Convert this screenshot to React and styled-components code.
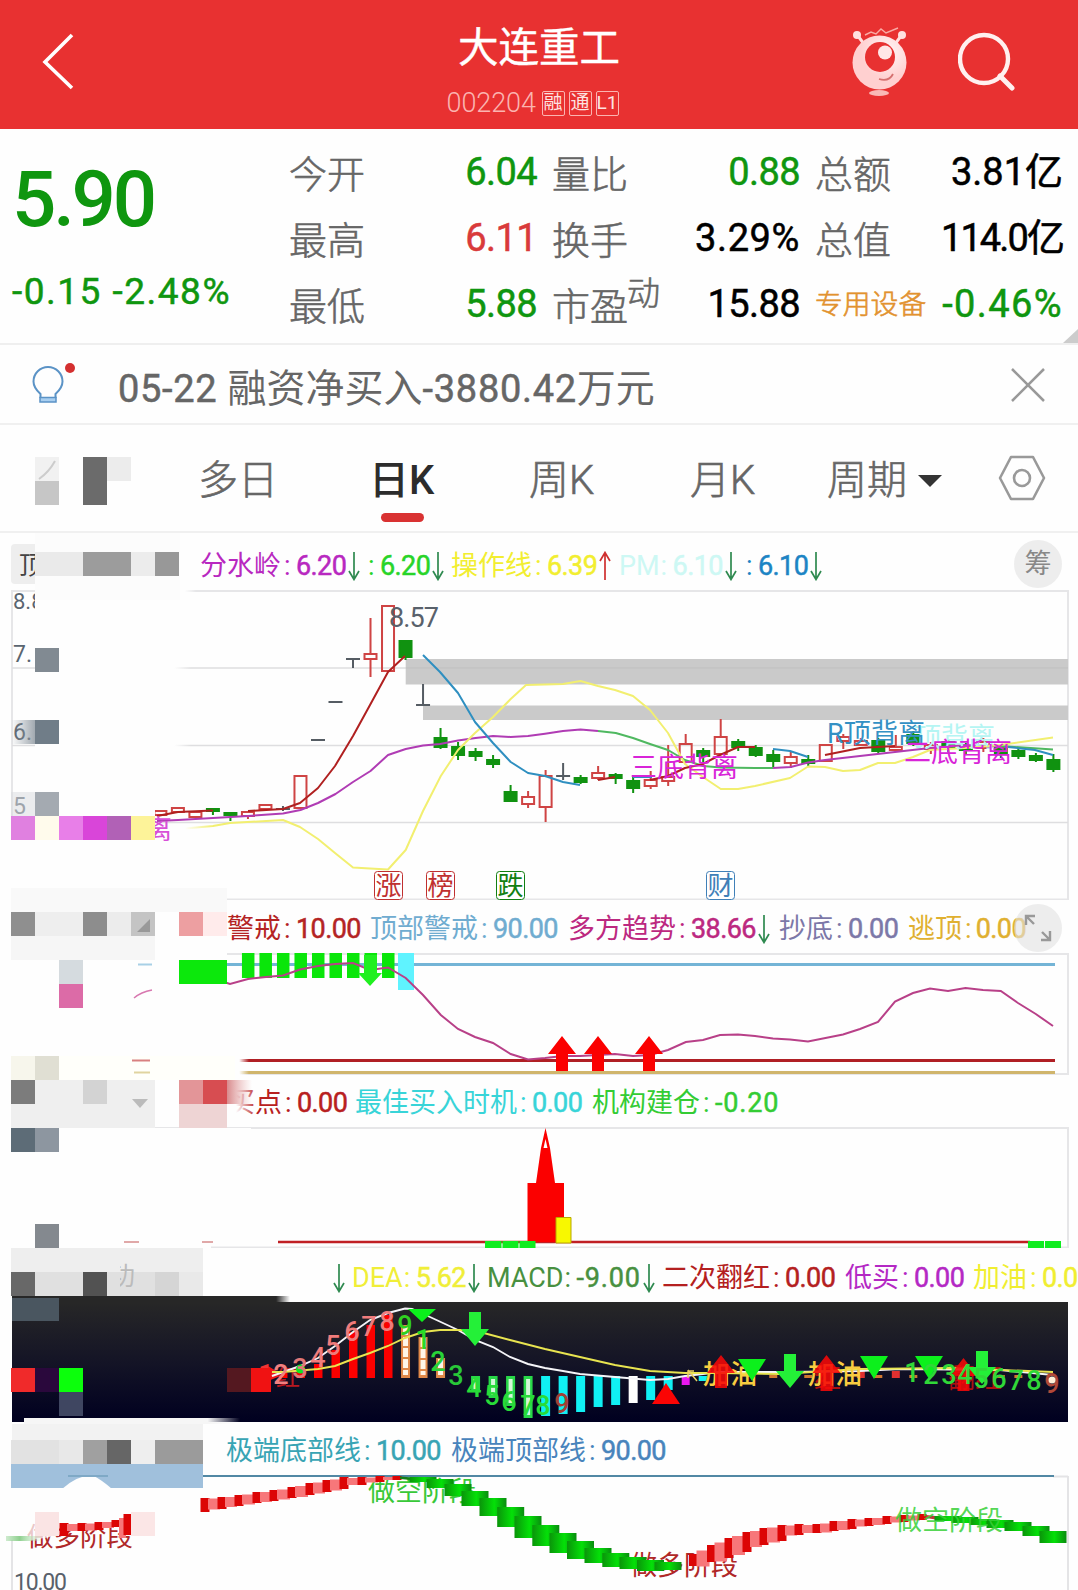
import React from "react";
import styled, { createGlobalStyle, css } from "styled-components";

const RED = "#e83131";
const UP = "#d93a3a";
const DOWN = "#0f960f";

const GlobalStyle = createGlobalStyle`
  * {
    box-sizing: border-box;
  }

  body {
    margin: 0;
    background-color: #fefefe;
    font-family: Roboto, "Noto Sans CJK SC", sans-serif;
  }
`;

const Page = styled.div`
  width: 1078px;
  height: 1590px;
  overflow: hidden;
  background-color: #fefefe;
`;

/* header */

const Header = styled.header`
  display: grid;
  grid-template-columns: 360px 1fr 360px;
  height: 129px;
  background-color: ${RED};
  color: #fff;
`;

const BackButton = styled.div`
  padding: 31px 0 0 40px;
`;

const TitleBlock = styled.div`
  display: flex;
  flex-direction: column;
  align-items: center;
  padding-top: 23px;
`;

const Title = styled.h1`
  margin: 0;
  font-size: 40.5px;
  font-weight: 400;
  line-height: 50px;
  -webkit-text-stroke: 0.4px #fff;
`;

const CodeRow = styled.div`
  display: flex;
  align-items: center;
  height: 26px;
  margin: 17px 0 0 -9px;
`;

const Code = styled.span`
  width: 95px;
  font-size: 27px;
  font-weight: 300;
  letter-spacing: -0.1px;
  color: #fbb4b0;
`;

const Tag = styled.span`
  width: 23px;
  height: 25px;
  margin-right: 4px;
  border: 1px solid #fbb4b0;
  border-radius: 2px;
  font-size: 19px;
  line-height: 22px;
  text-align: center;
  color: #fde3e1;
`;

const HeaderActions = styled.div`
  display: flex;
  justify-content: flex-end;
  gap: 51px;
  padding: 25px 62px 0 0;
`;

/* quote */

const Quote = styled.section`
  position: relative;
  display: grid;
  grid-template-columns: 289px 1fr;
  height: 216px;
  border-bottom: 2px solid #efefef;
`;

const PriceBlock = styled.div`
  padding: 18px 0 0 12px;
  color: ${DOWN};
`;

const Price = styled.div`
  font-size: 78px;
  font-weight: 500;
  line-height: 106px;
  letter-spacing: -3.2px;
`;

const Change = styled.div`
  margin-top: 19px;
  font-size: 37px;
  line-height: 40px;
  font-weight: 400;
  -webkit-text-stroke: 0.5px ${DOWN};
  letter-spacing: 1.5px;
  white-space: nowrap;
`;

const Metrics = styled.div`
  display: grid;
  grid-template-columns: repeat(3, 248px);
  grid-auto-rows: 66px;
  column-gap: 15px;
  padding-top: 9px;
`;

const Metric = styled.div`
  display: flex;
  justify-content: space-between;
  align-items: center;
  white-space: nowrap;
`;

const MetricLabel = styled.span`
  padding-top: ${({ $small }) => ($small ? 3 : 7)}px;
  font-size: ${({ $small }) => ($small ? 27.8 : 38)}px;
  font-weight: 300;
  line-height: 44px;
  color: ${({ $small }) => ($small ? "#e2922f" : "#666")};
  -webkit-text-stroke: 0.6px currentColor;

  sup {
    display: inline-block;
    margin-left: -1px;
    font-size: 33px;
    line-height: 20px;
    vertical-align: 15px;
  }
`;

const MetricValue = styled.span`
  padding-top: 1px;
  font-size: 38px;
  line-height: 44px;
  letter-spacing: ${({ $track = -0.6 }) => $track}px;
  color: ${({ $color }) => $color || "#000"};
  -webkit-text-stroke: 0.5px currentColor;
`;

const Corner = styled.div`
  position: absolute;
  right: 0;
  bottom: 0;
  border-style: solid;
  border-width: 0 0 14px 15px;
  border-color: transparent transparent #ccc transparent;
`;

/* notice */

const Notice = styled.section`
  display: flex;
  align-items: center;
  height: 80px;
  padding: 1px 33px 0 31px;
  border-bottom: 2px solid #f0f0f0;
`;

const NoticeText = styled.div`
  flex: 1;
  padding-left: 39px;
  font-size: 39px;
  color: #666;
  white-space: nowrap;

  span {
    font-size: 38px;
    letter-spacing: 0.7px;
    -webkit-text-stroke: 0.5px #666;
  }
`;

/* tabs */

const Tabs = styled.nav`
  display: flex;
  align-items: center;
  height: 108px;
  padding-left: 35px;
  border-bottom: 2px solid #f0f0f0;
`;

const Tab = styled.div`
  display: flex;
  flex-direction: column;
  justify-content: center;
  width: ${({ $width }) => $width}px;
  padding-top: 5px;
  font-size: 40px;
  line-height: 56px;
  font-weight: ${({ $active }) => ($active ? 500 : 300)};
  color: ${({ $active }) => ($active ? "#2c2c2c" : "#666")};
  ${({ $active }) =>
    !$active &&
    css`
      -webkit-text-stroke: 0.6px currentColor;
    `}
`;

const TabMark = styled.i`
  width: 43px;
  height: 9px;
  margin: 4px 0 -13px 12px;
  border-radius: 5px;
  background-color: #d93232;
`;

const TabLabel = styled.span`
  display: flex;
  align-items: center;
  gap: 11px;
  line-height: 56px;
`;

/* charts */

const Charts = styled.main`
  position: relative;
`;

const Legend = styled.div`
  position: relative;
  display: flex;
  align-items: center;
  height: ${({ $height }) => $height}px;
  padding: ${({ $drop }) => $drop || 0}px 0 0 ${({ $start }) => $start}px;
  overflow: hidden;
  font-size: 27px;
  line-height: 36px;
  white-space: nowrap;
`;

const LegendEntry = styled.div`
  display: flex;
  flex: none;
  align-items: center;
  width: ${({ $width }) => $width}px;
  color: ${({ $color }) => $color};
`;

const LegendColon = styled.span`
  width: ${({ $narrow }) => ($narrow ? 13 : 15)}px;
  padding-left: ${({ $narrow }) => ($narrow ? 1 : 3)}px;
`;

const LegendValue = styled.span`
  margin-right: 2px;
  letter-spacing: ${({ $signed }) => ($signed ? 0.8 : -0.6)}px;
  -webkit-text-stroke: 0.5px currentColor;
`;

const RoundButton = styled.div`
  position: absolute;
  top: ${({ $top }) => $top}px;
  right: 16px;
  display: flex;
  align-items: center;
  justify-content: center;
  width: 48px;
  height: 48px;
  border-radius: 50%;
  background-color: rgba(225, 225, 225, 0.6);
  font-size: 27px;
  color: #888;
`;

const Plot = styled.svg`
  display: block;
  width: 1078px;
  height: ${({ $height }) => $height}px;
  overflow: hidden;
`;

const PlotText = styled.text`
  font-family: Roboto, "Noto Sans CJK SC", sans-serif;
  font-size: ${({ $size }) => $size || 27}px;
  font-weight: ${({ $bold }) => ($bold ? 500 : 400)};
`;

const Mosaic = styled.svg`
  position: absolute;
  top: 0;
  left: 0;
  width: 320px;
  height: 1057px;
`;

const Arrow = ({ up }) => (
  <svg width="12" height="30" viewBox="0 0 12 30" fill="none">
    <path
      d={up ? "M6 29V2M1 10L6 1.5L11 10" : "M6 1V28M1 20L6 28.5L11 20"}
      stroke={up ? "#cf3030" : "#2f8a50"}
      strokeWidth="1.7"
    />
  </svg>
);

const LegendRow = ({ items, children, ...rest }) => (
  <Legend {...rest}>
    {items.map(([label, value, color, width, arrow], i) => (
      <LegendEntry key={i} $color={color} $width={width}>
        {label}
        {value && <LegendColon $narrow={/^[A-Z]*$/.test(label)}>:</LegendColon>}
        {value && <LegendValue $signed={value[0] === "-"}>{value}</LegendValue>}
        {arrow && <Arrow up={arrow === "up"} />}
      </LegendEntry>
    ))}
    {children}
  </Legend>
);

const X = (i) => 353 + 17.51 * i;

// [slot, color, high, low, bodyTop, bodyBottom]
const CANDLES = [
  [-11, "r", 811, 816, 811, 815],
  [-10, "r", 808, 812, 808, 812],
  [-9, "r", 812, 817, 812, 817],
  [-8, "g", 808, 815, 809, 811],
  [-7, "g", 813, 821, 813, 815],
  [-6, "r", 812, 819, 812, 816],
  [-5, "r", 805, 809, 805, 809],
  [-4, "k", 806, 811, 809, 809],
  [-3, "r", 776, 808, 776, 808],
  [-2, "k", 740, 740, 740, 740],
  [-1, "k", 702, 702, 702, 702],
  [0, "k", 659, 668, 659, 659],
  [1, "r", 618, 677, 654, 659],
  [2, "r", 606, 671, 606, 671],
  [3, "g", 640, 660, 641, 657],
  [4, "k", 684, 705, 705, 705],
  [5, "g", 728, 749, 738, 747],
  [6, "g", 742, 760, 747, 755],
  [7, "g", 748, 761, 752, 756],
  [8, "g", 755, 768, 760, 764],
  [9, "g", 785, 802, 792, 801],
  [10, "r", 791, 808, 797, 804],
  [11, "r", 770, 822, 776, 807],
  [12, "k", 763, 780, 776, 776],
  [13, "g", 775, 784, 778, 782],
  [14, "r", 766, 780, 773, 778],
  [15, "g", 773, 784, 775, 778],
  [16, "g", 775, 793, 781, 788],
  [17, "r", 771, 789, 780, 786],
  [18, "r", 745, 786, 777, 781],
  [19, "r", 734, 762, 744, 762],
  [20, "g", 748, 764, 751, 756],
  [21, "r", 719, 754, 737, 754],
  [22, "g", 739, 751, 742, 747],
  [23, "g", 745, 757, 748, 755],
  [24, "g", 750, 768, 755, 761],
  [25, "r", 752, 768, 757, 763],
  [26, "g", 755, 767, 760, 763],
  [27, "r", 745, 761, 745, 761],
  [28, "r", 734, 749, 737, 741],
  [29, "r", 738, 746, 741, 745],
  [30, "g", 738, 754, 741, 751],
  [31, "r", 735, 752, 747, 750],
  [32, "g", 731, 746, 735, 743],
  [33, "r", 742, 754, 745, 749],
  [34, "g", 739, 752, 742, 747],
  [35, "g", 743, 755, 746, 750],
  [36, "r", 738, 752, 742, 748],
  [37, "g", 745, 758, 748, 753],
  [38, "g", 748, 759, 751, 756],
  [39, "g", 753, 762, 756, 760],
  [40, "g", 754, 772, 760, 769],
];

const CANDLE_COLORS = { r: "#cf4444", g: "#109210", k: "#555c63" };

const Candle = ({ data: [slot, kind, high, low, top, bottom] }) => {
  const x = X(slot);
  const color = CANDLE_COLORS[kind];
  if (kind === "k") {
    return <path d={`M${x - 7} ${top}h14M${x} ${high}V${low}`} stroke={color} strokeWidth="2" />;
  }
  return (
    <g stroke={color} strokeWidth="2">
      <path d={`M${x} ${high}V${top}M${x} ${bottom}V${low}`} />
      <rect
        x={x - 6}
        y={top}
        width="12"
        height={bottom - top}
        fill={kind === "g" ? color : "none"}
      />
    </g>
  );
};

const MAIN_LINES = [
  ["#b03cb4", "157,821 178,820 213,818 248,816 283,813.5 300.5,810 318,803 335.5,794 353,782 370.5,771 388,755 405.7,749 423,745.5 440,744 458,740.5 475.6,738 493,736 510.7,737 528,736 545,733.7 563,731 580.5,729.5 598,731"],
  ["#4fb860", "598,731 615.8,733 633,738 650,744 668,750 685,760 703,766 720.8,767.5 755,768 773,768"],
  ["#b03cb4", "773,768 790.8,767 808,762.5 825,760 860,756 895,752 930,748 965,745 1008,747"],
  ["#4fb860", "1000,746 1053,749.5"],
  ["#f2ef70", "179,829 213,826 230,823 283,820 300,827 318,839 335,853 353,867.5 370,868.5 388,869.5 405.7,850 423,811 440.8,776 458,750 475,733 493,717 510.7,699 526,685 545,684.5 563,684 580.5,681 598,686 615,690 633,696 650,710 668,733 685,764 703,777 720.8,789 738,789 755,786 790,778 808,766.5 825,767 843,771 860,770 878,763 895,763 913,757 930,750 965,748 1000,745 1053,737.5"],
  ["#2f8fc0", "423,655 440,672 458,693 475,722 493,743 510.7,762 528,773 545,776 563,782 580,785"],
  ["#2f8fc0", "773,749 790,751 808,757"],
  ["#2f8fc0", "633,777 652,777"],
  ["#2f8fc0", "1008,747 1035,750 1053,755"],
  ["#b02020", "157,816 178,812 213,810.5"],
  ["#b02020", "248,811 283,809 300,803 318,788 335,766 353,736 370,705 388,672 405,656"],
  ["#b02020", "598,780 615,777"],
  ["#b02020", "650,780 668,776 685,768 703,764 720,755 738,747 755,747"],
  ["#b02020", "825,755 860,748 895,746"],
];

const EVENTS = [
  [374, "涨", "#c03030"],
  [426, "榜", "#c03030"],
  [496, "跌", "#128012"],
  [706, "财", "#4080b8"],
];

const MainChart = () => (
  <Plot $height={310} viewBox="0 590 1078 310" fill="none">
    <path d="M12 591H1068V899.5H12Z" stroke="#e6e6e8" strokeWidth="2" />
    <path d="M12 668H1068M12 745.5H1068M12 822.5H1068" stroke="#dedee0" strokeWidth="1.3" />
    <path d="M405.7 659H1068V684.5H405.7ZM423 705.5H1068V720H423Z" fill="#cacaca" />
    <path d="M406 668H1068" stroke="#bfbfbf" />
    {CANDLES.map((candle) => (
      <Candle key={candle[0]} data={candle} />
    ))}
    {MAIN_LINES.map(([color, points], i) => (
      <polyline key={i} points={points} stroke={color} strokeWidth="2" strokeLinejoin="round" />
    ))}
    <PlotText x="389" y="627" fill="#59616b" textLength="50">8.57</PlotText>
    <PlotText x="630" y="777" fill="#d824d8">三底背离</PlotText>
    <PlotText x="914" y="747" fill="#b5f5f3">顶背离</PlotText>
    <PlotText x="827" y="743" fill="#3390c4" textLength="98">R顶背离</PlotText>
    <PlotText x="904" y="762" fill="#d824d8">二底背离</PlotText>
    {EVENTS.map(([x, text, color]) => (
      <g key={text}>
        <rect x={x + 0.5} y="871.5" width="28" height="28" rx="3" fill="#fff" stroke={color} />
        <PlotText x={x + 1.5} y="895" fill={color} $size={26}>{text}</PlotText>
      </g>
    ))}
    <g fill="#5a6570">
      <PlotText x="13" y="609" $size={22}>8.8</PlotText>
      <PlotText x="13" y="662" $size={23}>7.</PlotText>
      <PlotText x="13" y="740" $size={23}>6.</PlotText>
      <PlotText x="13" y="814" $size={23}>5</PlotText>
    </g>
  </Plot>
);

const upArrow = (x, top, bottom) =>
  `M${x} ${top}L${x + 14} ${top + 18}H${x + 6}V${bottom}H${x - 6}V${top + 18}H${x - 14}Z`;
const downArrow = (x, top, bottom) =>
  `M${x} ${bottom}L${x + 14} ${bottom - 17}H${x + 6}V${top}H${x - 6}V${bottom - 17}H${x - 14}Z`;
const downTriangle = (x, top, bottom) => `M${x - 14} ${top}H${x + 14}L${x} ${bottom}Z`;

const TrendChart = () => (
  <Plot $height={122} viewBox="0 953 1078 122" fill="none">
    <path d="M12 954H1068V1074H12" stroke="#e6e6e8" strokeWidth="2" />
    <path d="M180 964.5H1055" stroke="#74b4d6" strokeWidth="3" />
    <path d="M150 1060.5H1055" stroke="#b01f24" strokeWidth="3" />
    <path d="M150 1072.5H1055" stroke="#d0b56c" strokeWidth="3" />
    {[-6, -5, -4, -3, -2, -1, 0, 1, 2].map((i) => (
      <rect key={i} x={X(i) - 6} y="953" width="12.5" height="25" fill="#0ae60a" />
    ))}
    <path d="M398 953H414V990H398Z" fill="#5ff3ff" />
    <polyline
      points="224,982 230,984 248,979 266,977 283,975.5 300,969.5 318,966 335,964 353,963 370,970 388,967.5 405.7,978 423,995 440.8,1015 458,1029 475,1037 493,1043 510.7,1054 528,1059.5 545,1058 563,1056 580,1056 598,1055 615,1054 633,1056 650,1055 668,1050 685.8,1042 703,1040 720,1035 738,1034.5 755,1036 773,1038.5 790,1039.5 808,1041.5 843,1034.5 860,1029 878,1022 895,1001.5 913,993 930,988.5 948,991 965.5,988 983,990 1000.8,991 1018,1003 1035.8,1014 1053,1026"
      stroke="#b84088"
      strokeWidth="2"
    />
    <path d="M364 955H377V973H382L370 986L358 973H364Z" fill="#20f020" />
    <path d={upArrow(562, 1036, 1071) + upArrow(598, 1036, 1071) + upArrow(649, 1036, 1071)} fill="#fb0000" />
  </Plot>
);

const BuyChart = () => (
  <Plot $height={121} viewBox="0 1127 1078 121" fill="none">
    <path d="M12 1128H1068V1247.5H12" stroke="#e6e6e8" strokeWidth="2" />
    <path d="M278 1242H1030" stroke="#c01f24" strokeWidth="2.6" />
    <path d="M527.5 1242V1183H536L541 1148L545.5 1128L550 1148L555 1183H564V1242Z" fill="#fb0000" />
    <path d="M543.5 1148L545.5 1139L547.5 1148Z" fill="#fff" />
    <path d="M556 1217.5H571V1243H556Z" fill="#f8f800" stroke="#b8a800" />
    <path
      d="M485 1241h16.5v7h-16.5zM502.5 1241h16v7h-16zM519.5 1241h16v7h-16zM1028 1241h16v7h-16zM1045 1241h16v7h-16z"
      fill="#10ec20"
    />
  </Plot>
);

const RED_BARS = [[-4, 1373], [-3, 1371], [-2, 1364], [-1, 1350], [0, 1332], [1, 1325], [2, 1315]];
const STRIPED_BARS = [[3, 1325], [4, 1337], [5, 1358]];
const GREEN_BARS = [[7, 1392], [8, 1398], [9, 1406], [10, 1418]];
const CYAN_BARS = [[11, 1416], [12, 1414], [13, 1412], [14, 1407], [15, 1405], [17, 1400], [18, 1390], [20, 1381]];

// [text, center, baseline, color]
const COUNTS = [
  ["1", 266, 1384, "#f03434"],
  ["2", 281, 1384, "#f08080"],
  ["3", 300, 1378, "#e07878"],
  ["4", 318, 1367, "#f07c7c"],
  ["5", 333, 1355, "#f07c7c"],
  ["6", 352, 1341, "#f07c7c"],
  ["7", 369, 1336, "#f07c7c"],
  ["8", 387, 1331, "#f07c7c"],
  ["9", 405, 1335, "#30d020"],
  ["1", 423, 1349, "#28dc28"],
  ["2", 438, 1371, "#28d438"],
  ["3", 456, 1385, "#28c838"],
  ["4", 474, 1397, "#28dc38"],
  ["5", 492, 1405, "#28dc38"],
  ["6", 509, 1411, "#28dc38"],
  ["7", 528, 1415, "#28dc38"],
  ["8", 543, 1415, "#28dc38"],
  ["9", 562, 1413, "#a04034"],
  ["1", 912, 1382, "#30d838"],
  ["2", 931, 1384, "#30d838"],
  ["3", 949, 1384, "#30d838"],
  ["4", 965, 1384, "#30d838"],
  ["5", 981, 1388, "#30d838"],
  ["6", 999, 1388, "#30d838"],
  ["7", 1016, 1390, "#30d838"],
  ["8", 1034, 1390, "#30d838"],
  ["9", 1052, 1393, "#b04838"],
];

const MacdChart = () => (
  <Plot $height={120} viewBox="0 1302 1078 120" fill="none">
    <defs>
      <linearGradient id="night" x1="0" y1="0" x2="0" y2="1">
        <stop offset="0" stopColor="#272727" />
        <stop offset="0.5" stopColor="#141426" />
        <stop offset="1" stopColor="#000020" />
      </linearGradient>
    </defs>
    <path d="M12 1302H1068V1422H12Z" fill="url(#night)" />
    {RED_BARS.map(([i, top]) => (
      <rect key={i} x={X(i) - 4} y={top} width="8.5" height={1378 - top} fill="#fb0000" />
    ))}
    {STRIPED_BARS.map(([i, top]) => (
      <g key={i}>
        <rect x={X(i) - 4.5} y={top} width="9" height={1378 - top} fill="#e08848" />
        <path d={`M${X(i)} ${top + 1}V1375`} stroke="#fff6e8" strokeWidth="5" strokeDasharray="9 2" />
      </g>
    ))}
    {GREEN_BARS.map(([i, bottom]) => (
      <g key={i}>
        <rect x={X(i) - 4.5} y="1376" width="9" height={bottom - 1376} fill="#28d848" />
        <rect x={X(i) - 2} y="1379" width="4" height={bottom - 1382} fill="#d4f8d8" />
      </g>
    ))}
    {CYAN_BARS.map(([i, bottom]) => (
      <rect key={i} x={X(i) - 4.5} y="1376" width="9" height={bottom - 1376} fill="#10f0f4" />
    ))}
    <path d={`M${X(16) - 4.5} 1376h9v27h-9z`} fill="#fff" />
    <path d={`M${X(19) - 4} 1376h8v9h-8z`} fill="#e818f0" />
    {[29, 31].map((i) => (
      <rect key={i} x={X(i) - 4} y="1371" width="8" height="7" fill="#e03030" />
    ))}
    {[24, 26, 30, 32, 37, 38].map((i) => (
      <rect key={i} x={X(i) - 4} y="1375" width="8" height="3" fill="#d07830" />
    ))}
    <path d="M268 1366L283 1375L268 1381Z" fill="#f01818" />
    <PlotText x="276" y="1386" fill="#b81820" $size={24}>红</PlotText>
    <PlotText x="814" y="1388" fill="#b01010">红</PlotText>
    <PlotText x="948" y="1388" fill="#b01010">翻红</PlotText>
    <polyline
      points="272,1376 300,1366 318,1358 335,1346 353,1332 370,1320 388,1313 405,1308.5 412,1309 430,1317 458,1330 475,1340 493,1347 510,1357 528,1364 545,1368 563,1371 580,1374 615,1377 650,1380 668,1379 685,1376 703,1374 720,1372 790,1372 860,1371 900,1369 1000,1370 1053,1375"
      stroke="#f4f4f8"
      strokeWidth="1.9"
    />
    <polyline
      points="272,1372 283,1372 318,1369 335,1366 353,1359 370,1353 388,1346 405,1338 423,1332 440,1330 460,1330 480,1332 510,1340 545,1349 580,1357 615,1365 650,1371 685,1373 720,1373 780,1374 860,1369 950,1368 1053,1372"
      stroke="#e8e450"
      strokeWidth="1.9"
    />
    <PlotText x="703" y="1384" fill="#f8cc40" $bold>加油</PlotText>
    <PlotText x="808" y="1384" fill="#f8cc40" $bold>加油</PlotText>
    <path
      d={upArrow(721, 1355, 1388) + upArrow(826.5, 1355, 1391) + upArrow(963.5, 1358, 1391)}
      fill="#f60808"
      fillOpacity="0.88"
    />
    <path d="M688 1370L697 1381M688 1378V1371H694" stroke="#e8d060" strokeWidth="1.5" />
    <path d="M666 1383L680 1404H652Z" fill="#fb0404" />
    <path
      d={
        downTriangle(422, 1309, 1322) +
        downTriangle(752, 1359, 1381) +
        downTriangle(874, 1356, 1379) +
        downTriangle(929, 1356, 1379)
      }
      fill="#0cf01c"
    />
    <path d={downArrow(475, 1312, 1346) + downArrow(790, 1354, 1388) + downArrow(982, 1351, 1384)} fill="#24f038" />
    <circle cx="300.5" cy="1369" r="4.5" fill="#10e820" />
    {COUNTS.map(([text, x, y, color], i) => (
      <PlotText key={i} x={x} y={y} fill={color} textAnchor="middle" $bold>
        {text}
      </PlotText>
    ))}
    <circle cx="1052" cy="1380" r="3.5" fill="#fff0d8" />
  </Plot>
);

// [center, top, bottom]
const RED_STEPS = [
  [[205, 1498, 1512], [222, 1497, 1509], [239, 1495, 1506], [257, 1492, 1503], [274, 1490, 1501], [292, 1487, 1498], [310, 1483, 1495], [327, 1480, 1492], [344, 1477, 1489], [362, 1477, 1485], [380, 1476, 1482], [397, 1476, 1480]],
  [[693.5, 1554, 1566], [711.5, 1545, 1562], [729, 1538, 1558], [747, 1532, 1552], [764, 1528, 1545], [782, 1525, 1541], [799, 1524, 1535], [817, 1524, 1533], [834, 1521, 1531], [852, 1519, 1529], [869, 1518, 1526], [887, 1516, 1524], [904, 1515, 1522], [922, 1514, 1520]],
  [[64, 1523, 1536], [82, 1523, 1531], [99, 1522, 1530], [116, 1520, 1527], [128, 1514, 1535]],
];
const GREEN_STEPS = [
  [423, 1477, 1482], [440, 1479, 1488], [458, 1484, 1496], [475, 1491, 1506], [493, 1498, 1516],
  [510.7, 1507, 1527], [528, 1516, 1538], [545.8, 1525, 1546], [563, 1533, 1553], [580.5, 1541, 1559],
  [598, 1548, 1563], [615.8, 1553, 1567], [633, 1557, 1569], [650.5, 1560, 1571], [668, 1562, 1570],
  [948, 1516, 1521], [965, 1517, 1523], [983, 1519, 1525], [1000, 1520, 1528], [1018, 1522, 1531],
  [1036, 1526, 1536], [1053, 1531, 1543],
];

const StageChart = () => (
  <Plot $height={115} viewBox="0 1475 1078 115" fill="none">
    <defs>
      <linearGradient id="ribbon">
        <stop offset="0" stopColor="#0a940a" />
        <stop offset="0.55" stopColor="#04e008" />
        <stop offset="1" stopColor="#0a8c10" />
      </linearGradient>
      <linearGradient id="tail">
        <stop offset="0" stopColor="#9fd89f" stopOpacity="0.5" />
        <stop offset="0.4" stopColor="#8fd08f" />
        <stop offset="1" stopColor="#c8ecc8" stopOpacity="0.2" />
      </linearGradient>
    </defs>
    <path d="M12 1540V1590M1068 1476V1590M1053 1476.5H1068" stroke="#e4e4e6" strokeWidth="2" />
    <path d="M70 1476H1054" stroke="#5288a4" strokeWidth="2" />
    <PlotText x="368" y="1501" fill="#38c838">做空阶段</PlotText>
    <PlotText x="630" y="1575" fill="#b02828">做多阶段</PlotText>
    <PlotText x="27" y="1546" fill="#b02828" $size={26.5}>做多阶段</PlotText>
    <path d="M26 1523H64L50 1537L26 1541Z" fill="#fefefe" fillOpacity="0.75" />
    {RED_STEPS.map((steps) =>
      steps.map(([x, top, bottom], i) => (
        <g key={x}>
          {i > 0 && (
            <rect x={steps[i - 1][0] + 3} y={(top + steps[i - 1][1]) / 2 + 1} width={x - steps[i - 1][0] - 5} height={bottom - top - 1} fill="#f7777a" />
          )}
          <rect x={x - 4.5} y={top} width="9" height={bottom - top} fill="#dc0505" />
        </g>
      ))
    )}
    <path d="M400 1476.5L432 1479V1482L400 1479Z" fill="#148018" />
    <path d="M926 1515L945 1517V1521L926 1518Z" fill="#c03838" />
    {GREEN_STEPS.map(([x, top, bottom]) => (
      <rect key={x} x={x - 13.5} y={top} width="27" height={bottom - top} fill="url(#ribbon)" />
    ))}
    <PlotText x="895" y="1530" fill="#38d038" fillOpacity="0.85">做空阶段</PlotText>
    <path d="M6 1536H40V1541H6Z" fill="url(#tail)" />
    <PlotText x="14" y="1590" fill="#59616b" textLength="53" $size={23}>10.00</PlotText>
  </Plot>
);

// pixelated cover over the left edge: [x, y, width, height, fill]
const CELLS = [
  [35, 533, 145, 67, "#fcfcfc"], [180, 588, 16, 8, "url(#whiteFade)"],
  [35, 552, 48, 24, "#eaeaea"], [83, 552, 48, 24, "#9c9c9c"], [131, 552, 24, 24, "#ececec"], [155, 552, 24, 24, "#989898"],
  [35, 600, 132, 192, "#fefefe"], [167, 600, 24, 192, "url(#whiteFade)"],
  [35, 648, 24, 24, "#818a92"], [35, 720, 24, 24, "#707d88"],
  [11, 720, 24, 24, "url(#fade)"],
  [59, 792, 96, 24, "#fefefe"], [11, 792, 24, 24, "#d9dcdf88"], [35, 792, 24, 24, "#a4aab1"],
  [11, 816, 24, 24, "#e080e0"], [35, 816, 24, 24, "#fffbec"], [59, 816, 24, 24, "#e87fe8"], [83, 816, 24, 24, "#d945d9"],
  [107, 816, 24, 24, "#b161b6"], [131, 816, 24, 24, "#fdf399"],
  [173, 824, 40, 16, "url(#whiteFade)"],
  [11, 840, 200, 48, "#fefefe"],
  [11, 888, 216, 24, "#f9f9f9"],
  [11, 912, 24, 24, "#8f8f8f"], [35, 912, 48, 24, "#eee"], [83, 912, 24, 24, "#8d8d8d"], [107, 912, 24, 24, "#ececec"], [131, 912, 24, 24, "#c4c4c4"],
  [179, 912, 24, 24, "#ed9fa1"], [203, 912, 24, 24, "#ffebeb"],
  [11, 936, 144, 24, "#f6f6f6"], [155, 936, 72, 24, "#fefefe"],
  [11, 960, 168, 96, "#fefefe"],
  [59, 960, 24, 24, "#d5dbdf"], [59, 984, 24, 24, "#dc6ba7"], [179, 960, 48, 24, "#0ce80c"],
  [11, 1056, 224, 24, "#fffffa"], [235, 1056, 14, 24, "url(#whiteFade)"],
  [11, 1056, 24, 24, "#f7f6ec"], [35, 1056, 24, 24, "#e0dfd3"],
  [11, 1080, 144, 48, "#efefef"], [11, 1080, 24, 24, "#7c7c7c"], [83, 1080, 24, 24, "#d3d3d3"],
  [227, 1088, 30, 30, "url(#whiteFade)"],
  [179, 1080, 24, 24, "#e39598"], [203, 1080, 24, 24, "#d74d51"], [227, 1080, 25, 24, "url(#redFade)"], [179, 1104, 48, 24, "#eed4d4"],
  [11, 1128, 240, 96, "#fefefe"],
  [11, 1128, 24, 24, "#5d6c77"], [35, 1128, 24, 24, "#8d96a0"],
  [11, 1224, 200, 24, "#fefefe"], [35, 1224, 24, 24, "#84898f"],
  [11, 1248, 192, 24, "#eee"], [11, 1272, 192, 24, "#e0e0e0"],
  [11, 1272, 24, 24, "#686868"], [83, 1272, 24, 24, "#525252"], [155, 1272, 24, 24, "#d5d5d5"], [179, 1272, 24, 24, "#e9e9e9"],
  [12, 1296, 278, 8, "url(#darkFade)"], [12, 1298, 47, 23, "#4a5660"],
  [11, 1368, 24, 24, "#f02a2a"], [35, 1368, 24, 24, "#2a083c"], [59, 1368, 24, 24, "#0cff0c"], [59, 1392, 24, 24, "#3f4661"],
  [227, 1368, 24, 24, "#541820"], [251, 1368, 20, 24, "#f01212"],
  [24, 1418, 216, 6, "url(#lightFade)"], [12, 1424, 191, 16, "#f2f2f2"],
  [11, 1440, 48, 24, "#e2e2e2"], [59, 1440, 24, 24, "#e8e8e8"], [83, 1440, 24, 24, "#a0a0a0"], [107, 1440, 24, 24, "#666"],
  [131, 1440, 24, 24, "#eee"], [155, 1440, 48, 24, "#9b9b9b"],
  [11, 1464, 192, 24, "#a0c0dc"],
  [35, 1512, 24, 24, "#fae4e4"], [131, 1512, 24, 24, "#fbe6e6"],
];

const Cover = () => (
  <Mosaic viewBox="0 533 320 1057">
    <defs>
      <linearGradient id="fade">
        <stop offset="0" stopColor="#8a949d" stopOpacity="0" />
        <stop offset="1" stopColor="#8a949d" stopOpacity="0.8" />
      </linearGradient>
      <linearGradient id="whiteFade">
        <stop offset="0.3" stopColor="#fefefe" />
        <stop offset="1" stopColor="#fefefe" stopOpacity="0" />
      </linearGradient>
      <linearGradient id="redFade">
        <stop offset="0" stopColor="#d88a8c" />
        <stop offset="1" stopColor="#e8b0b0" stopOpacity="0" />
      </linearGradient>
      <linearGradient id="darkFade">
        <stop offset="0.95" stopColor="#272727" />
        <stop offset="1" stopColor="#272727" stopOpacity="0" />
      </linearGradient>
      <linearGradient id="lightFade">
        <stop offset="0.85" stopColor="#f6f6f6" />
        <stop offset="1" stopColor="#f6f6f6" stopOpacity="0" />
      </linearGradient>
    </defs>
    {CELLS.map(([x, y, width, height, fill], i) => (
      <rect key={i} x={x} y={y} width={width} height={height} fill={fill} />
    ))}
    <path d="M11 548Q11 544 15 544H35V584H15Q11 584 11 580Z" fill="#eee" />
    <svg x="11" y="544" width="24" height="40">
      <PlotText x="8" y="30" fill="#444" $size={25}>顶</PlotText>
    </svg>
    <svg x="155" y="816" width="18" height="30">
      <PlotText x="-10" y="23" fill="#d850d8" $size={27}>离</PlotText>
    </svg>
    <path d="M137 932L150 919V932Z" fill="#999" />
    <path d="M132 1099H148L140 1108Z" fill="#bbb" />
    <path d="M134 998Q141 992 152 990" fill="none" stroke="#d878b0" strokeWidth="1.5" />
    <path d="M138 964.5H152" stroke="#a8d0e6" strokeWidth="2" />
    <path d="M132 1060.5H150" stroke="#d88080" strokeWidth="2" />
    <path d="M134 1072.5H150" stroke="#e0d4a0" strokeWidth="2" />
    <path d="M124 1242H139M202 1242H213" stroke="#e0a8a8" strokeWidth="2" />
    <svg x="120" y="1260" width="18" height="30">
      <PlotText x="-10" y="25" fill="#bbb" $size={25}>功</PlotText>
    </svg>
    <path d="M62 1489Q76 1476 92 1475Q102 1480 112 1489Z" fill="#fefefe" />
    <path d="M68 1476H108" stroke="#7fa9c6" strokeWidth="2" />
  </Mosaic>
);

const App = () => {
  return (
    <Page>
      <GlobalStyle />
      <Header>
        <BackButton>
          <svg width="36" height="60" viewBox="0 0 36 60" fill="none">
            <path d="M32 4L5 31L32 57" stroke="#fff" strokeWidth="3.6" />
          </svg>
        </BackButton>
        <TitleBlock>
          <Title>大连重工</Title>
          <CodeRow>
            <Code>002204</Code>
            <Tag>融</Tag>
            <Tag>通</Tag>
            <Tag>L1</Tag>
          </CodeRow>
        </TitleBlock>
        <HeaderActions>
          <svg width="56" height="72" viewBox="0 0 56 72" fill="none">
            <defs>
              <radialGradient id="body" cx="0.65" cy="0.3">
                <stop offset="0" stopColor="#fff6f6" />
                <stop offset="1" stopColor="#ffd0d0" />
              </radialGradient>
            </defs>
            <path d="M14 10L20 7L25 9L30 4L35 8L47 3" stroke="#f9aaa4" strokeWidth="1.4" />
            <path d="M7 11L13 19M50 11L44 19" stroke="#ffe0df" strokeWidth="3" />
            <circle cx="6" cy="10" r="4" fill="#ffe0df" />
            <circle cx="51" cy="10" r="4" fill="#ffe0df" />
            <circle cx="28.5" cy="37.5" r="27" fill="url(#body)" />
            <circle cx="29" cy="32" r="15" fill={RED} />
            <circle cx="34" cy="27.5" r="7" fill="#ffe6e6" />
            <path d="M28 54Q38 57 42 49" stroke="#d5706f" strokeWidth="1.8" />
            <ellipse cx="28" cy="68" rx="10" ry="3" fill="#f9b9b6" />
          </svg>
          <svg width="58" height="66" viewBox="0 0 58 66" fill="none" stroke="#fff0ef" strokeLinecap="round">
            <circle cx="26" cy="34" r="24" strokeWidth="4.4" />
            <path d="M42 51L54 63" strokeWidth="5" />
          </svg>
        </HeaderActions>
      </Header>

      <Quote>
        <PriceBlock>
          <Price>5.90</Price>
          <Change>-0.15 -2.48%</Change>
        </PriceBlock>
        <Metrics>
          <Metric>
            <MetricLabel>今开</MetricLabel>
            <MetricValue $color={DOWN}>6.04</MetricValue>
          </Metric>
          <Metric>
            <MetricLabel>量比</MetricLabel>
            <MetricValue $color={DOWN}>0.88</MetricValue>
          </Metric>
          <Metric>
            <MetricLabel>总额</MetricLabel>
            <MetricValue $track={0}>3.81亿</MetricValue>
          </Metric>
          <Metric>
            <MetricLabel>最高</MetricLabel>
            <MetricValue $color={UP}>6.11</MetricValue>
          </Metric>
          <Metric>
            <MetricLabel>换手</MetricLabel>
            <MetricValue $track={0.6}>3.29%</MetricValue>
          </Metric>
          <Metric>
            <MetricLabel>总值</MetricLabel>
            <MetricValue $track={-1.9}>114.0亿</MetricValue>
          </Metric>
          <Metric>
            <MetricLabel>最低</MetricLabel>
            <MetricValue $color={DOWN}>5.88</MetricValue>
          </Metric>
          <Metric>
            <MetricLabel>
              市盈<sup>动</sup>
            </MetricLabel>
            <MetricValue>15.88</MetricValue>
          </Metric>
          <Metric>
            <MetricLabel $small>专用设备</MetricLabel>
            <MetricValue $color={DOWN} $track={1.4}>-0.46%</MetricValue>
          </Metric>
        </Metrics>
        <Corner />
      </Quote>

      <Notice>
        <svg width="48" height="46" viewBox="0 0 48 46" fill="none" stroke="#5b93c6">
          <path d="M9.5 36V32C5 28 2.5 24 2.5 19.5A14.5 14.5 0 0 1 31.5 19.5C31.5 24 29 28 24.5 32V36" strokeWidth="2" />
          <path d="M9 35.5H25V40H9Z" fill="#a9cff0" strokeWidth="1.5" />
          <circle cx="39" cy="6" r="5" fill="#d43030" stroke="none" />
        </svg>
        <NoticeText>
          <span>05-22 </span>融资净买入<span>-3880.42</span>万元
        </NoticeText>
        <svg width="34" height="34" viewBox="0 0 34 34" stroke="#999" strokeWidth="2.5">
          <path d="M1 1L33 33M33 1L1 33" />
        </svg>
      </Notice>

      <Tabs>
        <Tab $width={163}>
          <svg width="96" height="48" viewBox="0 0 96 48">
            <path d="M0 0H24V24H0Z" fill="#f1f1f1" />
            <path d="M4 22Q14 15 20 4" stroke="#ccc" fill="none" strokeWidth="2" />
            <path d="M0 24H24V48H0Z" fill="#c6c6c6" />
            <path d="M48 0H72V48H48Z" fill="#6b6b6b" />
            <path d="M72 0H96V24H72Z" fill="#ececec" />
          </svg>
        </Tab>
        <Tab $width={171}>多日</Tab>
        <Tab $width={160} $active>
          <TabLabel>日K</TabLabel>
          <TabMark />
        </Tab>
        <Tab $width={161}>周K</Tab>
        <Tab $width={137}>月K</Tab>
        <Tab $width={171}>
          <TabLabel>
            周期
            <svg width="24" height="12" viewBox="0 0 24 12">
              <path d="M0 0H24L12 12Z" fill="#333" />
            </svg>
          </TabLabel>
        </Tab>
        <svg width="48" height="46" viewBox="0 0 48 46" fill="none" stroke="#999" strokeWidth="2.6">
          <path d="M13 2H35L46 23L35 44H13L2 23Z" strokeLinejoin="round" />
          <circle cx="24" cy="23" r="8" />
        </svg>
      </Tabs>

      <Charts>
        <LegendRow
          $height={57}
          $drop={8}
          $start={200}
          items={[
            ["分水岭", "6.20", "#b828c0", 167, "down"],
            ["", "6.20", "#28d428", 84, "down"],
            ["操作线", "6.39", "#f2ee30", 168, "up"],
            ["PM", "6.10", "#cdf8f4", 126, "down"],
            ["", "6.10", "#1c84c4", 84, "down"],
          ]}
        >
          <RoundButton $top={7}>筹</RoundButton>
        </LegendRow>
        <MainChart />
        <LegendRow
          $height={53}
          $drop={5}
          $start={227}
          items={[
            ["警戒", "10.00", "#b42424", 143],
            ["顶部警戒", "90.00", "#70acd0", 198],
            ["多方趋势", "38.66", "#bc2880", 211, "down"],
            ["抄底", "0.00", "#7c78a8", 129],
            ["逃顶", "0.00", "#e0b030", 120],
          ]}
        >
          <RoundButton $top={4}>
            <svg width="28" height="28" viewBox="0 0 28 28" fill="none" stroke="#999" strokeWidth="2.4">
              <path d="M2 11V2H11M2 2L10 10M26 17V26H17M26 26L18 18" />
            </svg>
          </RoundButton>
        </LegendRow>
        <TrendChart />
        <LegendRow
          $height={52}
          $drop={3}
          $start={228}
          items={[
            ["买点", "0.00", "#b82020", 127],
            ["最佳买入时机", "0.00", "#38d4d8", 237],
            ["机构建仓", "-0.20", "#34cc34", 200],
          ]}
        />
        <BuyChart />
        <LegendRow
          $height={54}
          $drop={5}
          $start={333}
          items={[
            ["", "", "#2f8a50", 19, "down"],
            ["DEA", "5.62", "#f0ee38", 135, "down"],
            ["MACD", "-9.00", "#489040", 175, "down"],
            ["二次翻红", "0.00", "#b42020", 183],
            ["低买", "0.00", "#b428c4", 128],
            ["加油", "0.00", "#f0ee30", 128],
          ]}
        />
        <MacdChart />
        <LegendRow
          $height={53}
          $drop={4}
          $start={226}
          items={[
            ["极端底部线", "10.00", "#38a4b4", 225],
            ["极端顶部线", "90.00", "#4884bc", 225],
          ]}
        />
        <StageChart />
        <Cover />
      </Charts>
    </Page>
  );
};

export default App;
